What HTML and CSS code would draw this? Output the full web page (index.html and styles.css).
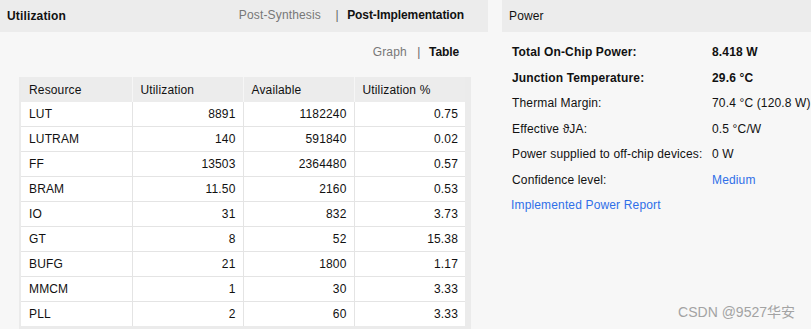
FILE: index.html
```html
<!DOCTYPE html>
<html>
<head>
    <title>Project Summary</title>
    <link rel="stylesheet" href="styles.css">
</head>
<body>
    <div class="page">
        <div class="util">
            <div class="panel-head">
                <span class="panel-title">Utilization</span>
                <span class="tabs">
                    <span class="tab">Post-Synthesis</span>
                    <span class="sep">|</span>
                    <span class="tab active">Post-Implementation</span>
                </span>
            </div>
            <div class="view-switch">
                <span class="tab">Graph</span>
                <span class="sep">|</span>
                <span class="tab active">Table</span>
            </div>
            <div class="table-frame">
                <table class="util-table">
                    <thead>
                        <tr><th>Resource</th><th>Utilization</th><th>Available</th><th>Utilization %</th></tr>
                    </thead>
                    <tbody>
                        <tr><td>LUT</td><td class="num">8891</td><td class="num">1182240</td><td class="num">0.75</td></tr>
                        <tr><td>LUTRAM</td><td class="num">140</td><td class="num">591840</td><td class="num">0.02</td></tr>
                        <tr><td>FF</td><td class="num">13503</td><td class="num">2364480</td><td class="num">0.57</td></tr>
                        <tr><td>BRAM</td><td class="num">11.50</td><td class="num">2160</td><td class="num">0.53</td></tr>
                        <tr><td>IO</td><td class="num">31</td><td class="num">832</td><td class="num">3.73</td></tr>
                        <tr><td>GT</td><td class="num">8</td><td class="num">52</td><td class="num">15.38</td></tr>
                        <tr><td>BUFG</td><td class="num">21</td><td class="num">1800</td><td class="num">1.17</td></tr>
                        <tr><td>MMCM</td><td class="num">1</td><td class="num">30</td><td class="num">3.33</td></tr>
                        <tr><td>PLL</td><td class="num">2</td><td class="num">60</td><td class="num">3.33</td></tr>
                    </tbody>
                </table>
            </div>
        </div>

        <div class="power">
            <div class="panel-head">
                <span class="panel-title power-title">Power</span>
            </div>
            <div class="power-list">
                <div class="power-row strong"><span class="label">Total On-Chip Power:</span><span class="value">8.418 W</span></div>
                <div class="power-row strong"><span class="label">Junction Temperature:</span><span class="value">29.6 °C</span></div>
                <div class="power-row"><span class="label">Thermal Margin:</span><span class="value">70.4 °C (120.8 W)</span></div>
                <div class="power-row"><span class="label">Effective &#977;JA:</span><span class="value">0.5 °C/W</span></div>
                <div class="power-row"><span class="label">Power supplied to off-chip devices:</span><span class="value">0 W</span></div>
                <div class="power-row"><span class="label">Confidence level:</span><span class="value link">Medium</span></div>
                <div class="power-row"><span class="link report">Implemented Power Report</span></div>
            </div>
        </div>
    </div>
    <div class="watermark">CSDN @9527华安</div>
</body>
</html>
```

FILE: styles.css
```css
body {
    margin: 0;
    background-color: #f7f7f7;
    color: #111;
    font-family: "Liberation Sans", Arial, sans-serif;
    font-size: 12px;
    letter-spacing: 0.15px;
    height: 329px;
    overflow: hidden;
    position: relative;
}

.page {
    display: flex;
    gap: 14px;
}

.util {
    width: 488px;
}

.power {
    flex: 1;
}

.panel-head {
    height: 32px;
    background-color: #ececec;
    display: flex;
    align-items: center;
    justify-content: space-between;
    padding: 0 24px 0 7px;
}

.panel-title {
    font-weight: bold;
    color: #111;
}

.power-title {
    font-weight: normal;
}

.tabs {
    margin-top: -2px;
}

.tab {
    color: #777;
}

.tab.active {
    color: #111;
    font-weight: bold;
    letter-spacing: -0.1px;
}

.sep {
    color: #666;
    margin: 0 5px 0 11px;
}

.view-switch {
    text-align: right;
    padding: 12px 29px 0 0;
    height: 16px;
    line-height: 16px;
    margin-bottom: 17px;
}

.view-switch .sep {
    margin: 0 5px 0 7px;
}

.table-frame {
    margin-left: 19px;
    width: 446px;
    background-color: #ebebeb;
    padding: 0 4px 3px 2px;
}

.util-table {
    width: 444px;
    border-collapse: collapse;
    table-layout: fixed;
}

.util-table th {
    height: 25px;
    padding: 0 8px;
    text-align: left;
    font-weight: normal;
    background-color: #ececec;
    border-left: 1px solid #f6f6f6;
}

.util-table th:first-child {
    border-left: none;
}

.util-table td {
    height: 24px;
    padding: 0 8px;
    background-color: #fff;
    border-bottom: 1px solid #e4e4e4;
    border-left: 1px solid #e4e4e4;
}

.util-table td:first-child {
    border-left: none;
}

.util-table tr:last-child td {
    border-bottom: none;
}

.util-table td.num {
    text-align: right;
    padding-right: 7px;
}

.power-list {
    padding: 8px 0 0 10px;
}

.power-row {
    display: flex;
    height: 25.5px;
    line-height: 25.5px;
}

.power-row.strong {
    font-weight: bold;
}

.power-row .label {
    width: 200px;
}

.link {
    color: #2f6fe8;
}

.report {
    margin-left: -1px;
}

.watermark {
    position: absolute;
    right: 16px;
    bottom: 8px;
    color: #a3a3a3;
    font-family: "Liberation Sans", "Noto Sans CJK SC", sans-serif;
    font-size: 14px;
    letter-spacing: 0;
}
```
